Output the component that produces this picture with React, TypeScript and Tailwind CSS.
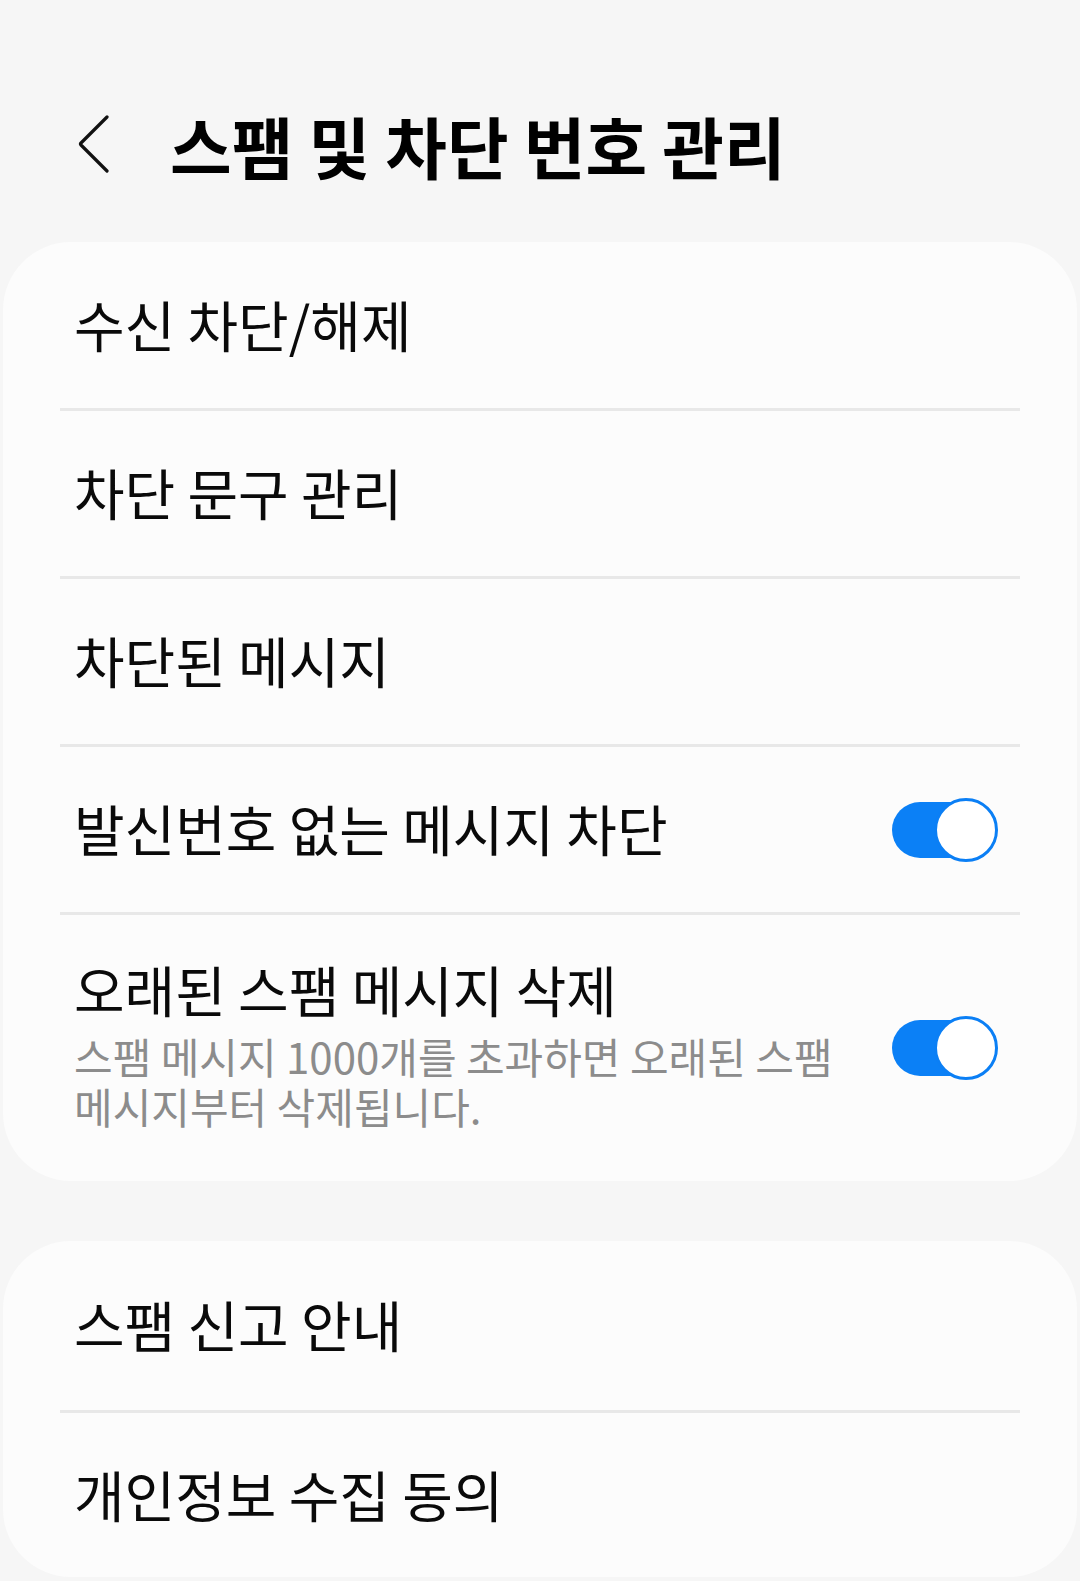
import React from 'react';

const font = { fontFamily: '"Noto Sans CJK KR", "Noto Sans", sans-serif' };

function Toggle() {
  return (
    <div className="relative w-[106px] h-[64px] shrink-0">
      <div className="absolute left-0 top-[4px] w-[98px] h-[56px] rounded-full bg-[#0b80f6]" />
      <div className="absolute right-0 top-0 w-[64px] h-[64px] rounded-full bg-white border-[3px] border-[#0b7ff5]" />
    </div>
  );
}

function Divider() {
  return <div className="mx-[57px] h-[3px] bg-[#e8e8e8]" />;
}

function Row({ label, height = 'h-[165px]', toggle }: { label: string; height?: string; toggle?: boolean }) {
  return (
    <div className={`${height} flex items-center pl-[71px] pr-[79px]`}>
      <span className="flex-1 text-[55px] text-[#0a0a0a] leading-none -mt-[4px]">{label}</span>
      {toggle && <Toggle />}
    </div>
  );
}

export default function App() {
  return (
    <div className="min-h-[1581px] bg-[#f6f6f6] pt-[112px] pb-[5px]" style={font}>
      <div className="flex items-center h-[64px] mb-[66px] pl-[78px]">
        <svg width="32" height="58" viewBox="0 0 32 58" fill="none" className="shrink-0">
          <path d="M29 2 L3 28 Q2 29 3 30 L29 56" stroke="#111" strokeWidth="3.2" strokeLinecap="round" strokeLinejoin="round" />
        </svg>
        <h1 className="ml-[60px] text-[67px] font-bold text-black leading-none">
          스팸 및 차단 번호 관리
        </h1>
      </div>

      <div className="mx-[3px] bg-[#fcfcfc] rounded-[68px]">
        <Row label="수신 차단/해제" height="h-[166px]" />
        <Divider />
        <Row label="차단 문구 관리" />
        <Divider />
        <Row label="차단된 메시지" />
        <Divider />
        <Row label="발신번호 없는 메시지 차단" toggle />
        <Divider />
        <div className="h-[266px] flex items-center pl-[71px] pr-[79px]">
          <div className="flex-1 min-w-0 pr-[16px] -mt-[4px]">
            <div className="text-[55px] text-[#0a0a0a] leading-none">오래된 스팸 메시지 삭제</div>
            <div className="mt-[15px] text-[42px] leading-[50px] text-[#8c8c8c] break-keep">
              스팸 메시지 1000개를 초과하면 오래된 스팸 메시지부터 삭제됩니다.
            </div>
          </div>
          <Toggle />
        </div>
      </div>

      <div className="mx-[3px] mt-[60px] bg-[#fcfcfc] rounded-[68px]">
        <Row label="스팸 신고 안내" height="h-[169px]" />
        <Divider />
        <Row label="개인정보 수집 동의" height="h-[164px]" />
      </div>
    </div>
  );
}
